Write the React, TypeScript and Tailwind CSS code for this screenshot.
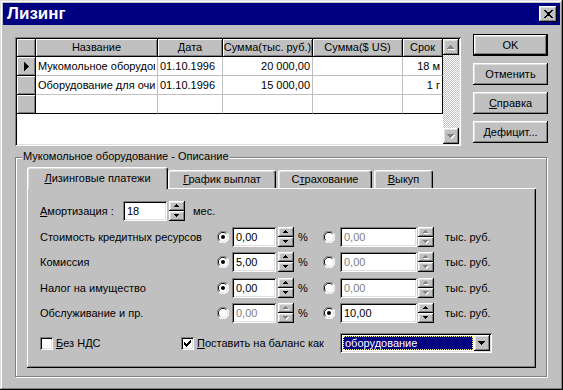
import React from "react";

const RAISED =
  "shadow-[inset_-1px_-1px_#000000,inset_1px_1px_#ffffff,inset_-2px_-2px_#808080,inset_2px_2px_#dfdfdf]";
const SUNKEN =
  "shadow-[inset_1px_1px_#808080,inset_-1px_-1px_#ffffff,inset_2px_2px_#000000,inset_-2px_-2px_#dfdfdf]";

function Tri({ dir, disabled }: { dir: "up" | "down"; disabled?: boolean }) {
  const up = "M2 0h1v1h-1z M1 1h3v1h-3z M0 2h5v1h-5z";
  const down = "M0 0h5v1h-5z M1 1h3v1h-3z M2 2h1v1h-1z";
  const d = dir === "up" ? up : down;
  return (
    <svg width="6" height="4" viewBox="0 0 6 4" shapeRendering="crispEdges">
      {disabled && <path d={d} fill="#ffffff" transform="translate(1,1)" />}
      <path d={d} fill={disabled ? "#808080" : "#000000"} />
    </svg>
  );
}

function BigTri({ dir, disabled }: { dir: "up" | "down"; disabled?: boolean }) {
  const up = "M3 0h1v1h-1z M2 1h3v1h-3z M1 2h5v1h-5z M0 3h7v1h-7z";
  const down = "M0 0h7v1h-7z M1 1h5v1h-5z M2 2h3v1h-3z M3 3h1v1h-1z";
  const d = dir === "up" ? up : down;
  return (
    <svg width="8" height="5" viewBox="0 0 8 5" shapeRendering="crispEdges">
      {disabled && <path d={d} fill="#ffffff" transform="translate(1,1)" />}
      <path d={d} fill={disabled ? "#808080" : "#000000"} />
    </svg>
  );
}

function Spin({ disabled }: { disabled?: boolean }) {
  return (
    <div className="flex flex-col w-[16px] h-[20px] shrink-0">
      <div className={`h-[10px] bg-[#c0c0c0] ${RAISED} flex items-center justify-center`}>
        <Tri dir="up" disabled={disabled} />
      </div>
      <div className={`h-[10px] bg-[#c0c0c0] ${RAISED} flex items-center justify-center`}>
        <Tri dir="down" disabled={disabled} />
      </div>
    </div>
  );
}

function Edit({ className, value, disabled }: { className: string; value: string; disabled?: boolean }) {
  return (
    <div
      className={`h-[20px] shrink-0 bg-white ${SUNKEN} flex items-center pl-[4px] ${
        disabled ? "text-[#808080]" : "text-black"
      } ${className}`}
    >
      {value}
    </div>
  );
}

function Radio({ checked }: { checked?: boolean }) {
  return (
    <div className="w-[13px] h-[13px] shrink-0 flex items-center justify-center">
      <svg width="12" height="12" viewBox="0 0 12 12">
        <circle cx="6" cy="6" r="5.5" fill="#ffffff" />
        <path d="M10.2 1.8 A5.6 5.6 0 0 0 1.8 10.2" stroke="#808080" strokeWidth="1" fill="none" />
        <path d="M1.8 10.2 A5.6 5.6 0 0 0 10.2 1.8" stroke="#ffffff" strokeWidth="1" fill="none" />
        <path d="M9.3 2.7 A4.6 4.6 0 0 0 2.7 9.3" stroke="#000000" strokeWidth="1" fill="none" />
        <path d="M2.7 9.3 A4.6 4.6 0 0 0 9.3 2.7" stroke="#dfdfdf" strokeWidth="1" fill="none" />
        {checked && <circle cx="6" cy="6" r="2" fill="#000000" />}
      </svg>
    </div>
  );
}

function Check({ checked }: { checked?: boolean }) {
  return (
    <div className={`w-[13px] h-[13px] shrink-0 bg-white ${SUNKEN} flex items-center justify-center`}>
      {checked && (
        <svg width="7" height="7" viewBox="0 0 7 7" shapeRendering="crispEdges">
          <path
            d="M0 2h1v3h-1z M1 3h1v3h-1z M2 4h1v3h-1z M3 3h1v3h-1z M4 2h1v3h-1z M5 1h1v3h-1z M6 0h1v3h-1z"
            fill="#000000"
          />
        </svg>
      )}
    </div>
  );
}

function CloseX() {
  return (
    <svg width="9" height="8" viewBox="0 0 8 7" shapeRendering="crispEdges">
      <path
        d="M0 0h2v1h-2z M6 0h2v1h-2z M1 1h2v1h-2z M5 1h2v1h-2z M2 2h4v1h-4z M3 3h2v1h-2z M2 4h4v1h-4z M1 5h2v1h-2z M5 5h2v1h-2z M0 6h2v1h-2z M6 6h2v1h-2z"
        fill="#000000"
      />
    </svg>
  );
}

const COLW = ["w-[122px]", "w-[65px]", "w-[90px]", "w-[90px]", "w-[40px]"];
const HEAD = ["Название", "Дата", "Сумма(тыс. руб.)", "Сумма($ US)", "Срок"];
const ROWS: string[][] = [
  ["Мукомольное оборудование", "01.10.1996", "20 000,00", "", "18 м"],
  ["Оборудование для очистки", "01.10.1996", "15 000,00", "", "1 г"],
  ["", "", "", "", ""],
];
const ALIGN = ["justify-start", "justify-start", "justify-end", "justify-end", "justify-end"];

const FIXED =
  "bg-[#c0c0c0] border-r border-b border-black shadow-[inset_1px_1px_#ffffff,inset_-1px_-1px_#808080]";

function Grid() {
  return (
    <div className={`mt-[3px] w-[446px] h-[109px] shrink-0 bg-white ${SUNKEN} p-[2px] flex`}>
      <div className="w-[426px] flex flex-col">
        <div className="flex h-[18px]">
          <div className={`w-[19px] h-[18px] ${FIXED}`} />
          {HEAD.map((h, i) => (
            <div
              key={i}
              className={`${COLW[i]} h-[18px] ${FIXED} flex items-center justify-center whitespace-nowrap overflow-hidden`}
            >
              {h}
            </div>
          ))}
        </div>
        {ROWS.map((r, ri) => (
          <div key={ri} className="flex h-[19px]">
            <div className={`w-[19px] h-[19px] ${FIXED} flex items-center justify-center`}>
              {ri === 0 && (
                <svg width="5" height="9" viewBox="0 0 5 9" shapeRendering="crispEdges">
                  <path d="M0 0h1v9h-1z M1 1h1v7h-1z M2 2h1v5h-1z M3 3h1v3h-1z M4 4h1v1h-1z" fill="#000000" />
                </svg>
              )}
            </div>
            {r.map((c, ci) => (
              <div
                key={ci}
                className={`${COLW[ci]} h-[19px] bg-white border-r border-b ${
                  ci === 4 ? "border-r-black" : "border-r-[#c0c0c0]"
                } ${ri === 2 ? "border-b-black" : "border-b-[#c0c0c0]"} flex items-center ${
                  ALIGN[ci]
                } px-[2px] overflow-hidden`}
              >
                <span className="whitespace-nowrap overflow-hidden">{c}</span>
              </div>
            ))}
          </div>
        ))}
      </div>
      <div className="w-[16px] flex flex-col">
        <div className={`h-[16px] bg-[#c0c0c0] ${RAISED} flex items-center justify-center`}>
          <BigTri dir="up" disabled />
        </div>
        <div className="flex-1 bg-[image:repeating-conic-gradient(#c0c0c0_0%_25%,#ffffff_0%_50%)] bg-[length:2px_2px]" />
        <div className={`h-[16px] bg-[#c0c0c0] ${RAISED} flex items-center justify-center`}>
          <BigTri dir="down" disabled />
        </div>
      </div>
    </div>
  );
}

function Btn({ children, def }: { children: React.ReactNode; def?: boolean }) {
  if (def) {
    return (
      <div className="w-[75px] h-[22px] border border-black">
        <div className={`w-full h-full bg-[#c0c0c0] ${RAISED} flex items-center justify-center`}>{children}</div>
      </div>
    );
  }
  return (
    <div className={`w-[75px] h-[22px] bg-[#c0c0c0] ${RAISED} flex items-center justify-center`}>{children}</div>
  );
}

function ValueRow({
  label,
  r1,
  v1,
  d1,
  r2,
  v2,
  d2,
  mt,
}: {
  label: string;
  r1: boolean;
  v1: string;
  d1?: boolean;
  r2: boolean;
  v2: string;
  d2?: boolean;
  mt: string;
}) {
  return (
    <div className={`flex items-center h-[20px] ${mt}`}>
      <div className="w-[176px] shrink-0 whitespace-nowrap">{label}</div>
      <Radio checked={r1} />
      <Edit className="ml-[3px] w-[44px]" value={v1} disabled={d1} />
      <div className="ml-[2px]">
        <Spin disabled={d1} />
      </div>
      <div className="ml-[4px] w-[24px] shrink-0">%</div>
      <Radio checked={r2} />
      <Edit className="ml-[5px] w-[77px]" value={v2} disabled={d2} />
      <div className="ml-[1px]">
        <Spin disabled={d2} />
      </div>
      <div className="ml-[11px] whitespace-nowrap">тыс. руб.</div>
    </div>
  );
}

function Tab({ children, className }: { children: React.ReactNode; className: string }) {
  return (
    <div
      className={`h-[18px] bg-[#c0c0c0] border-l border-t border-r border-l-white border-t-white border-r-black rounded-t-[3px] shadow-[inset_-1px_0_#808080,inset_1px_1px_#dfdfdf] flex items-center justify-center whitespace-nowrap ${className}`}
    >
      {children}
    </div>
  );
}

function GroupBox() {
  return (
    <div className="ml-[12px] mt-[11px] w-[532px] h-[220px] relative border border-[#808080] shadow-[inset_1px_1px_#ffffff,1px_1px_#ffffff] pt-[9px] pl-[11px]">
      <div className="absolute left-[6px] -top-[8px] px-[1px] bg-[#c0c0c0] leading-[13px] whitespace-nowrap">
        Мукомольное оборудование - Описание
      </div>
      <div className="w-[509px]">
        <div className="flex items-end h-[22px]">
          <div className="w-[141px] h-[22px] bg-[#c0c0c0] border-l border-t border-r border-l-white border-t-white border-r-black rounded-t-[3px] shadow-[inset_-1px_0_#808080,inset_1px_1px_#dfdfdf] flex items-start justify-center pt-[4px] whitespace-nowrap">
            <span>
              <span className="underline">Л</span>изинговые платежи
            </span>
          </div>
          <div className="flex-1 h-[19px] flex flex-col">
            <div className="flex items-end gap-[2px] h-[18px]">
              <Tab className="w-[108px]">
                <span>
                  <span className="underline">Г</span>рафик выплат
                </span>
              </Tab>
              <Tab className="w-[94px]">
                <span>
                  С<span className="underline">т</span>рахование
                </span>
              </Tab>
              <Tab className="w-[59px]">
                <span>
                  <span className="underline">В</span>ыкуп
                </span>
              </Tab>
            </div>
            <div className="h-px bg-white" />
          </div>
        </div>
        <div className="h-[179px] bg-[#c0c0c0] shadow-[inset_-1px_-1px_#000000,inset_1px_0_#ffffff,inset_-2px_-2px_#808080] pl-[13px] pt-[12px] flex flex-col">
          <div className="flex items-center h-[20px]">
            <div className="w-[83px] shrink-0 whitespace-nowrap">
              <span className="underline">А</span>мортизация :
            </div>
            <Edit className="w-[44px]" value="18" />
            <div className="ml-[2px]">
              <Spin />
            </div>
            <div className="ml-[8px]">мес.</div>
          </div>
          <ValueRow mt="mt-[6px]" label="Стоимость кредитных ресурсов" r1 v1="0,00" r2={false} v2="0,00" d2 />
          <ValueRow mt="mt-[5px]" label="Комиссия" r1 v1="5,00" r2={false} v2="0,00" d2 />
          <ValueRow mt="mt-[6px]" label="Налог на имущество" r1 v1="0,00" r2={false} v2="0,00" d2 />
          <ValueRow mt="mt-[5px]" label="Обслуживание и пр." r1={false} v1="0,00" d1 r2 v2="10,00" />
          <div className="flex items-center h-[20px] mt-[10px]">
            <div className="w-[141px] shrink-0 flex items-center">
              <Check />
              <span className="ml-[3px] whitespace-nowrap">
                <span className="underline">Б</span>ез НДС
              </span>
            </div>
            <div className="w-[159px] shrink-0 flex items-center">
              <Check checked />
              <span className="ml-[3px] whitespace-nowrap">
                <span className="underline">П</span>оставить на баланс как
              </span>
            </div>
            <div className={`w-[152px] h-[20px] bg-white ${SUNKEN} p-[2px] flex`}>
              <div className="flex-1 p-[1px]">
                <div className="h-full bg-[#000080] text-white border border-dotted border-[#ffff80] flex items-center pl-[1px] whitespace-nowrap">
                  оборудование
                </div>
              </div>
              <div className={`w-[16px] h-[16px] bg-[#c0c0c0] ${RAISED} flex items-center justify-center`}>
                <BigTri dir="down" />
              </div>
            </div>
          </div>
        </div>
      </div>
    </div>
  );
}

export default function App() {
  return (
    <div
      className={`w-[563px] h-[390px] bg-[#c0c0c0] p-[3px] flex flex-col font-['Liberation_Sans',Arial,sans-serif] text-[11px] leading-[13px] text-black shadow-[inset_-1px_-1px_#000000,inset_1px_1px_#dfdfdf,inset_-2px_-2px_#808080,inset_2px_2px_#ffffff]`}
    >
      <div className="h-[22px] shrink-0 bg-[#000080] flex items-center justify-between pl-[4px] pr-[3px]">
        <span className="text-white font-bold text-[17px] leading-[20px]">Лизинг</span>
        <div className={`w-[18px] h-[16px] bg-[#c0c0c0] ${RAISED} flex items-center justify-center`}>
          <CloseX />
        </div>
      </div>
      <div className="flex items-start pl-[12px] mt-[9px]">
        <Grid />
        <div className="ml-[12px] flex flex-col gap-[7px]">
          <Btn def>OK</Btn>
          <Btn>Отменить</Btn>
          <Btn>
            <span>
              <span className="underline">С</span>правка
            </span>
          </Btn>
          <Btn>
            <span>
              <span className="underline">Д</span>ефицит...
            </span>
          </Btn>
        </div>
      </div>
      <GroupBox />
    </div>
  );
}
